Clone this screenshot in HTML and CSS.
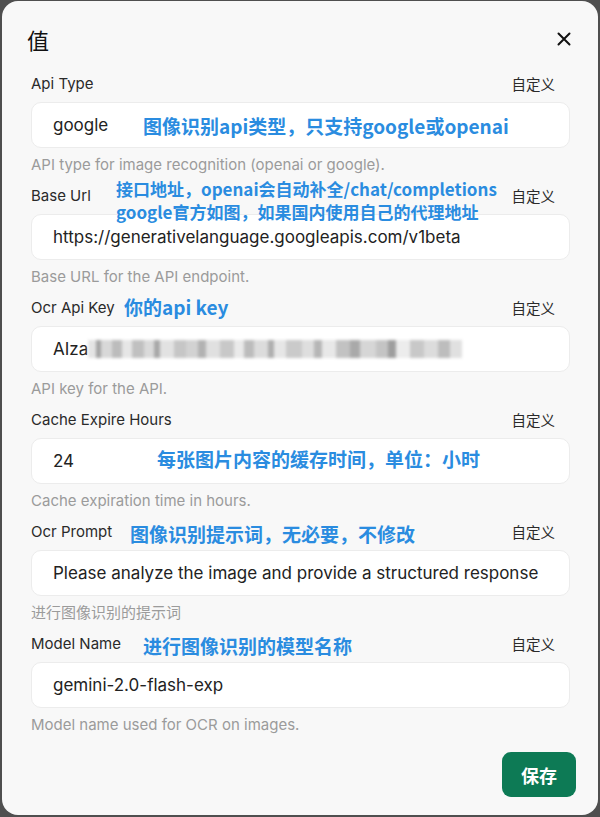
FILE: index.html
```html
<!DOCTYPE html>
<html lang="zh">
<head>
  <meta charset="UTF-8" />
  <title>值</title>
  <link rel="stylesheet" href="styles.css">
</head>
<body>
  <div class="modal">
    <div class="modal-head">
      <h2>值</h2>
      <svg class="close" width="14" height="14" viewBox="0 0 14 14">
        <path d="M1.5 1.5 L12.5 12.5 M12.5 1.5 L1.5 12.5" stroke="#111" stroke-width="2" stroke-linecap="round" />
      </svg>
    </div>

    <div class="field">
      <div class="label-row"><span>Api Type</span><span class="custom">自定义</span></div>
      <div class="input">google</div>
      <div class="help">API type for image recognition (openai or google).</div>
      <div class="note note-1">图像识别api类型，只支持google或openai</div>
    </div>

    <div class="field">
      <div class="label-row"><span>Base Url</span><span class="custom">自定义</span></div>
      <div class="input">https://generativelanguage.googleapis.com/v1beta</div>
      <div class="help">Base URL for the API endpoint.</div>
      <div class="note note-2">接口地址，openai会自动补全/chat/completions<br>google官方如图，如果国内使用自己的代理地址</div>
    </div>

    <div class="field">
      <div class="label-row"><span>Ocr Api Key</span><span class="custom">自定义</span></div>
      <div class="input">AIza<span class="masked"></span></div>
      <div class="help">API key for the API.</div>
      <div class="note note-3">你的api key</div>
    </div>

    <div class="field">
      <div class="label-row"><span>Cache Expire Hours</span><span class="custom">自定义</span></div>
      <div class="input">24</div>
      <div class="help">Cache expiration time in hours.</div>
      <div class="note note-4">每张图片内容的缓存时间，单位：小时</div>
    </div>

    <div class="field">
      <div class="label-row"><span>Ocr Prompt</span><span class="custom">自定义</span></div>
      <div class="input">Please analyze the image and provide a structured response</div>
      <div class="help">进行图像识别的提示词</div>
      <div class="note note-5">图像识别提示词，无必要，不修改</div>
    </div>

    <div class="field">
      <div class="label-row"><span>Model Name</span><span class="custom">自定义</span></div>
      <div class="input">gemini-2.0-flash-exp</div>
      <div class="help">Model name used for OCR on images.</div>
      <div class="note note-6">进行图像识别的模型名称</div>
    </div>

    <div class="modal-foot">
      <button class="save">保存</button>
    </div>
  </div>
</body>
</html>
```

FILE: styles.css
```css
html, body {
  margin: 0;
  padding: 0;
  height: 100%;
  overflow: hidden;
}
body {
  background: #4f4f4f;
  font-family: Inter, "Noto Sans CJK SC", sans-serif;
  color: #222;
}
.modal {
  position: relative;
  margin: 1px 2px 0 2px;
  height: 814px;
  box-sizing: border-box;
  background: #f8f8f8;
  border-radius: 16px;
  padding: 23px 28px 0 29px;
}
.modal-head {
  display: flex;
  justify-content: space-between;
  align-items: center;
  height: 30px;
  margin: 0 0 18px -4px;
}
.modal-head h2 {
  margin: 0;
  font-size: 22px;
  font-weight: 400;
  line-height: 30px;
  color: #111;
  font-family: "Noto Sans CJK SC", sans-serif;
}
.close {
  margin-right: -1px;
}
.field {
  position: relative;
  margin-bottom: 9px;
}
.label-row {
  display: flex;
  justify-content: space-between;
  height: 24px;
  line-height: 24px;
  font-size: 15px;
  color: #2a2a2a;
  padding-right: 15px;
}
.custom {
  font-size: 14.5px;
  font-family: "Noto Sans CJK SC", sans-serif;
}
.input {
  margin-top: 6px;
  height: 46px;
  box-sizing: border-box;
  background: #fff;
  border: 1px solid #ececec;
  border-radius: 10px;
  padding: 0 18px 0 21px;
  font-size: 17px;
  line-height: 44px;
  white-space: nowrap;
  overflow: hidden;
  color: #222;
}
.masked {
  display: inline-block;
  vertical-align: middle;
  width: 374px;
  height: 18px;
  margin-top: -2px;
  filter: blur(1.6px);
  background:
    linear-gradient(90deg,
      #e4e4e4 0, #e4e4e4 8px, #a4a4a4 8px, #a4a4a4 13px, #d8d8d8 13px, #d8d8d8 24px,
      #bcbcbc 24px, #bcbcbc 34px, #e6e6e6 34px, #e6e6e6 44px, #c0c0c0 44px, #c0c0c0 56px,
      #dadada 56px, #dadada 66px, #a8a8a8 66px, #a8a8a8 72px, #e2e2e2 72px, #e2e2e2 86px,
      #c6c6c6 86px, #c6c6c6 98px, #d2d2d2 98px, #d2d2d2 110px, #b2b2b2 110px, #b2b2b2 118px,
      #e0e0e0 118px, #e0e0e0 132px, #c8c8c8 132px, #c8c8c8 146px, #eaeaea 146px, #eaeaea 156px,
      #bcbcbc 156px, #bcbcbc 166px, #dcdcdc 166px, #dcdcdc 180px, #aeaeae 180px, #aeaeae 186px,
      #e6e6e6 186px, #e6e6e6 198px, #cacaca 198px, #cacaca 214px, #dedede 214px, #dedede 226px,
      #b6b6b6 226px, #b6b6b6 234px, #e8e8e8 234px, #e8e8e8 248px, #c2c2c2 248px, #c2c2c2 262px,
      #a9a9a9 262px, #a9a9a9 272px, #d6d6d6 272px, #d6d6d6 288px, #c4c4c4 288px, #c4c4c4 300px,
      #9e9e9e 300px, #9e9e9e 308px, #ececec 308px, #ececec 322px, #c8c8c8 322px, #c8c8c8 336px,
      #dcdcdc 336px, #dcdcdc 350px, #bdbdbd 350px, #bdbdbd 362px, #e0e0e0 362px, #e0e0e0 374px);
}
.help {
  margin-top: 7px;
  height: 20px;
  line-height: 20px;
  font-size: 15px;
  color: #9b9b9b;
}
.note {
  position: absolute;
  font-family: "Noto Sans CJK SC", sans-serif;
  font-weight: 700;
  font-size: 19px;
  line-height: 24px;
  color: #2a8ce0;
  white-space: nowrap;
}
.note-1 { left: 112px; top: 42px; }
.note-2 { left: 85px; top: -7px; line-height: 23px; font-size: 17px; }
.note-3 { left: 93px; top: -1px; }
.note-4 { left: 126px; top: 39px; }
.note-5 { left: 99px; top: 2px; }
.note-6 { left: 112px; top: 2px; }
.modal-foot {
  display: flex;
  justify-content: flex-end;
  margin: 17px -6px 0 0;
}
.save {
  width: 74px;
  height: 45px;
  border: none;
  border-radius: 9px;
  background: #0d7a55;
  color: #fff;
  font-family: "Noto Sans CJK SC", sans-serif;
  font-weight: 700;
  font-size: 18px;
  padding: 0;
}
```
